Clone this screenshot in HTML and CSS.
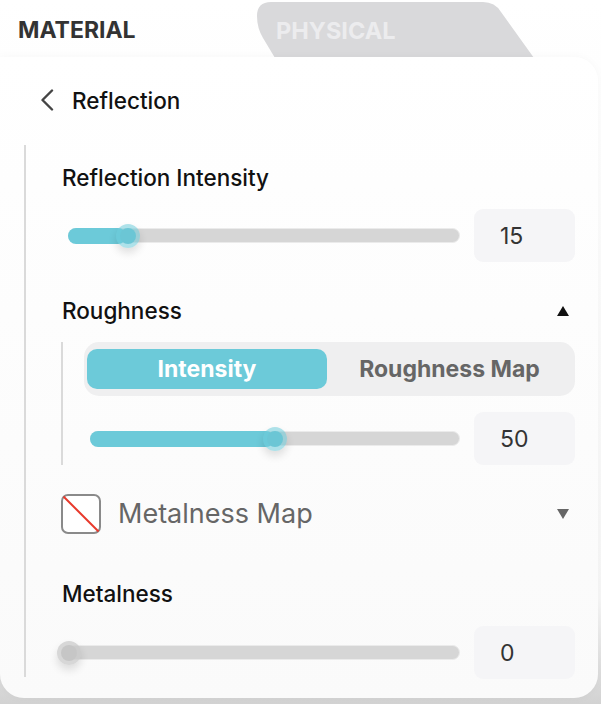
FILE: index.html
```html
<!DOCTYPE html>
<html>
<head>
<meta charset="utf-8">
<link rel="stylesheet" href="styles.css">
</head>
<body>
<div class="page">
  <div class="tabs">
    <div class="tab tab-active">MATERIAL</div>
    <div class="tab tab-inactive">
      <svg class="tab-shape" width="280" height="56" viewBox="0 0 280 56">
        <path d="M0 14 Q0 0 14 0 L226 0 Q238 0 244 10 L277 56 L18 56 L6 36 Q0 26 0 14 Z" fill="#d9d9db"/>
      </svg>
      <span class="tab-label">PHYSICAL</span>
    </div>
  </div>
  <div class="card">
    <div class="header">
      <svg class="chevron" width="14" height="22" viewBox="0 0 14 22">
        <path d="M12 1.5 L2.5 11 L12 20.5" fill="none" stroke="#444" stroke-width="2.4" stroke-linecap="round" stroke-linejoin="round"/>
      </svg>
      <span class="header-title">Reflection</span>
    </div>
    <div class="body">
      <div class="label">Reflection Intensity</div>
      <div class="slider-row gap-a">
        <div class="slider">
          <div class="track"><div class="fill" style="width:15%"></div><div class="thumb" style="left:15%"></div></div>
        </div>
        <div class="num">15</div>
      </div>

      <div class="label label-row gap-b">
        <span>Roughness</span>
        <span class="tri tri-up"></span>
      </div>
      <div class="sub">
        <div class="segmented">
          <div class="seg seg-active">Intensity</div>
          <div class="seg">Roughness Map</div>
        </div>
        <div class="slider-row gap-c">
          <div class="slider">
            <div class="track"><div class="fill" style="width:50%"></div><div class="thumb" style="left:50%"></div></div>
          </div>
          <div class="num">50</div>
        </div>
      </div>

      <div class="map-row">
        <svg class="map-icon" width="40" height="40" viewBox="0 0 40 40">
          <rect x="1" y="1" width="38" height="38" rx="6" fill="#fff" stroke="#8a8a8a" stroke-width="2"/>
          <line x1="2.5" y1="2.5" x2="37.5" y2="37.5" stroke="#e8392b" stroke-width="2"/>
        </svg>
        <span class="map-label">Metalness Map</span>
        <span class="tri tri-down"></span>
      </div>

      <div class="label gap-d">Metalness</div>
      <div class="slider-row gap-e">
        <div class="slider">
          <div class="track"><div class="thumb thumb-off" style="left:0%"></div></div>
        </div>
        <div class="num">0</div>
      </div>
    </div>
  </div>
</div>
</body>
</html>
```

FILE: styles.css
```css
* { box-sizing: border-box; }
html, body { margin: 0; padding: 0; }
body {
  width: 601px;
  height: 704px;
  overflow: hidden;
  font-family: Inter, "Liberation Sans", sans-serif;
  background: linear-gradient(180deg, #ffffff 0%, #f6f6f6 85%, #d2d2d2 100%);
}
.page {
  position: relative;
  width: 601px;
  height: 704px;
}
.tabs {
  display: flex;
  height: 57px;
  align-items: flex-end;
}
.tab {
  font-weight: 700;
  font-size: 23px;
}
.tab-active {
  color: #333;
  padding: 0 0 14px 18px;
  width: 257px;
  height: 57px;
  display: flex;
  align-items: flex-end;
  line-height: 26px;
  position: relative;
  z-index: 2;
}
.tab-inactive {
  position: relative;
  width: 280px;
  height: 55px;
  color: #ececee;
}
.tab-shape {
  position: absolute;
  left: 0;
  top: 0;
}
.tab-label {
  position: relative;
  display: block;
  padding: 16px 0 0 19px;
  line-height: 26px;
  font-size: 23.5px;
}
.card {
  width: 598px;
  height: 641px;
  background: linear-gradient(180deg, #ffffff 0%, #fafafa 100%);
  border-radius: 0 24px 24px 24px;
  box-shadow: 0 0 10px rgba(0,0,0,0.03);
  padding: 21px 23px 21px 24px;
  display: flex;
  flex-direction: column;
  position: relative;
  z-index: 1;
}
.header {
  height: 44px;
  display: flex;
  align-items: center;
  padding-left: 16px;
}
.chevron { display: block; }
.header-title {
  margin-left: 18px;
  font-size: 22.5px;
  font-weight: 500;
  color: #111;
}
.body {
  margin-top: 23px;
  border-left: 2px solid #dadada;
  height: 532px;
  padding: 20px 0 0 36px;
  display: flex;
  flex-direction: column;
}
.label {
  font-size: 22.5px;
  font-weight: 500;
  color: #111;
  line-height: 26px;
}
.label-row {
  display: flex;
  align-items: center;
  justify-content: space-between;
  padding-right: 6px;
}
.gap-a { margin-top: 18px; }
.gap-b { margin-top: 36px; }
.gap-c { margin-top: 16px; }
.gap-d { margin-top: 47px; }
.gap-e { margin-top: 19px; }
.slider-row {
  display: flex;
  align-items: center;
  height: 53px;
}
.slider {
  flex: 1;
  padding: 0 14px 0 6px;
}
.track {
  position: relative;
  height: 15px;
  border-radius: 8px;
  background: #d6d6d6;
  border: 1.5px solid #ebebeb;
}
.fill {
  position: absolute;
  left: -1.5px;
  top: -1.5px;
  bottom: -1.5px;
  border-radius: 8px;
  background: #6ccad9;
}
.thumb {
  position: absolute;
  top: 50%;
  width: 24px;
  height: 24px;
  margin: -12px 0 0 -12px;
  border-radius: 50%;
  background: rgba(108, 202, 217, 0.55);
  box-shadow: 0 5px 8px rgba(0,0,0,0.12);
}
.thumb::after {
  content: "";
  position: absolute;
  left: 4px;
  top: 4px;
  width: 16px;
  height: 16px;
  border-radius: 50%;
  background: #6bc6d5;
}
.thumb-off {
  background: rgba(200, 200, 200, 0.7);
}
.thumb-off::after {
  background: #c6c6c6;
}
.num {
  width: 101px;
  height: 53px;
  border-radius: 9px;
  background: #f5f5f7;
  color: #333;
  font-size: 23px;
  display: flex;
  align-items: center;
  padding-left: 26px;
}
.tri {
  width: 0;
  height: 0;
  border-left: 6px solid transparent;
  border-right: 6px solid transparent;
}
.tri-up { border-bottom: 10px solid #111; }
.tri-down { border-top: 10px solid #666; }
.sub {
  margin-top: 18px;
  margin-left: -1px;
  border-left: 2px solid #dadada;
  padding-left: 21px;
}
.segmented {
  display: flex;
  height: 54px;
  padding: 7px 3px;
  border-radius: 15px;
  background: #efeff0;
}
.seg {
  flex: 1;
  display: flex;
  align-items: center;
  justify-content: center;
  font-size: 23px;
  font-weight: 700;
  color: #666;
  border-radius: 10px;
}
.seg-active {
  flex: 0 0 240px;
  background: #6ccad9;
  color: #fff;
}
.map-row {
  margin-top: 29px;
  display: flex;
  align-items: center;
  height: 40px;
  padding-right: 6px;
}
.map-icon { display: block; margin-left: -1px; }
.map-label {
  margin-left: 17px;
  font-size: 27px;
  font-weight: 400;
  color: #666;
  flex: 1;
  line-height: 30px;
}
```
